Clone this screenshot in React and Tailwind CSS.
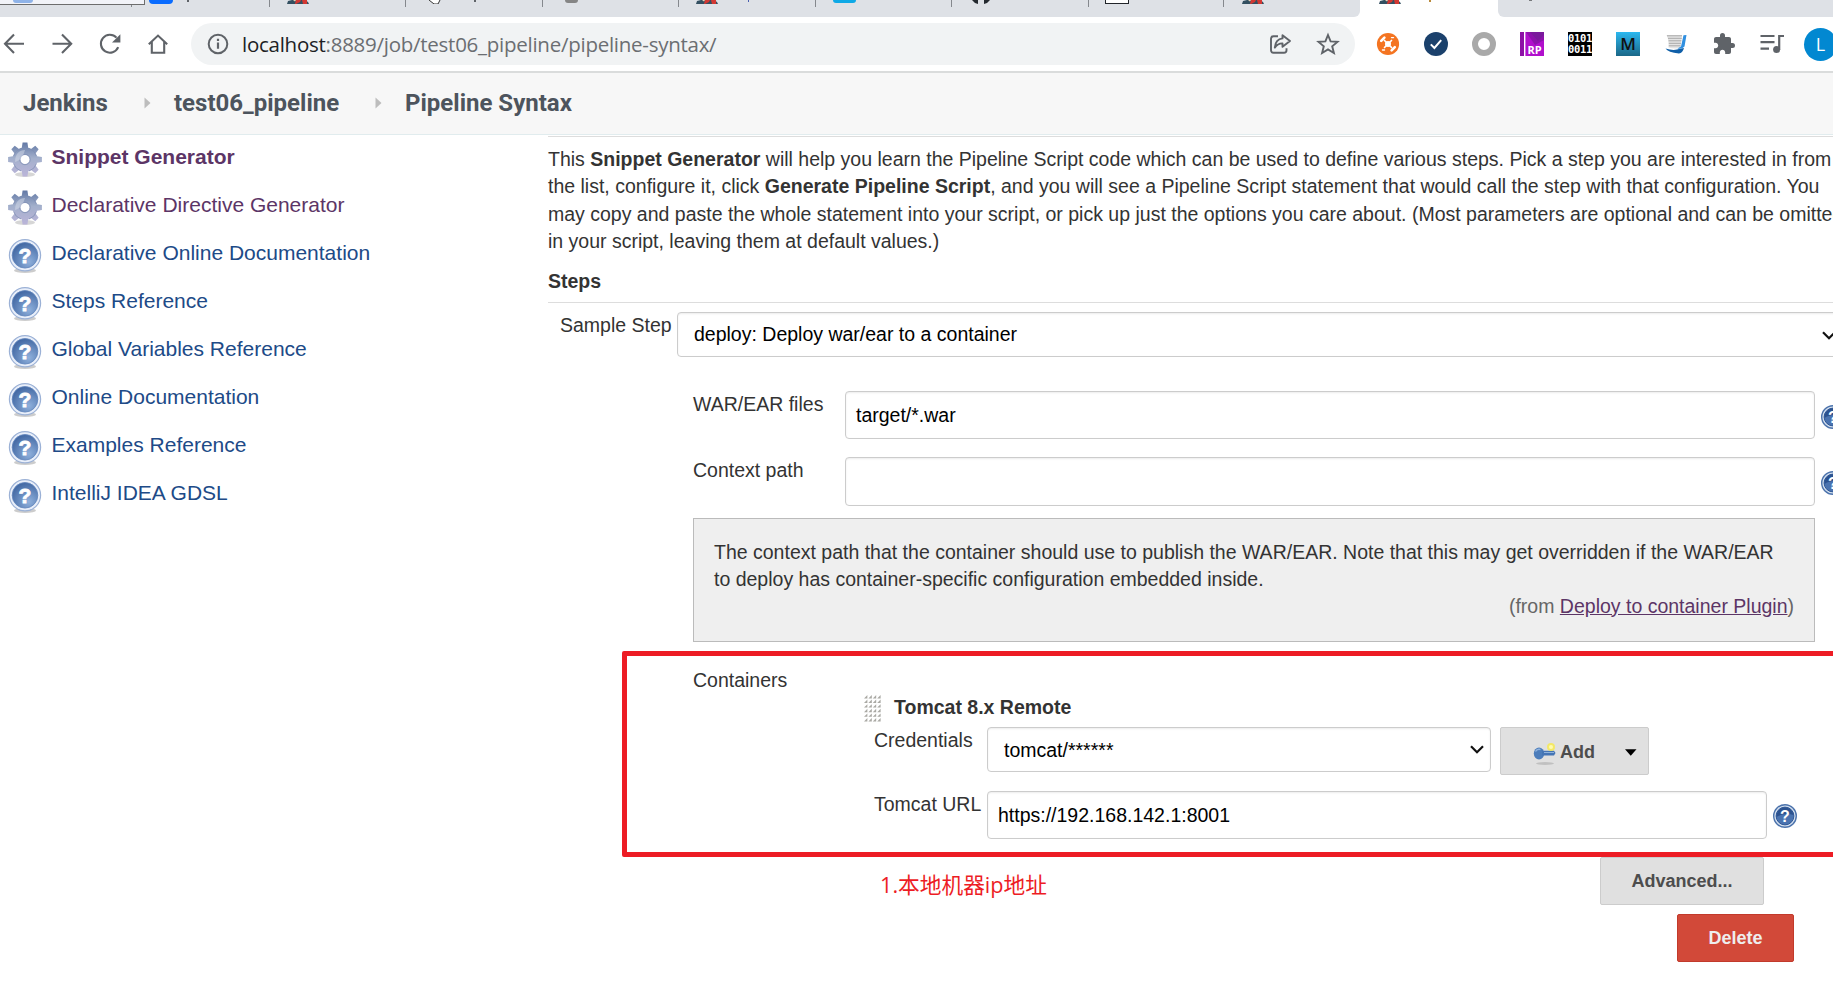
import React from "react";

const ARIAL = "font-['Liberation_Sans',Arial,sans-serif]";

/* ---------- shared drawings ---------- */

function Gear() {
  const teeth = [0, 45, 90, 135, 180, 225, 270, 315];
  return (
    <svg width="36" height="36" viewBox="0 0 36 36" className="shrink-0">
      <defs>
        <linearGradient id="gearFill" x1="0" y1="0" x2="0" y2="1" gradientUnits="objectBoundingBox">
          <stop offset="0" stopColor="#5f76a3" />
          <stop offset="0.45" stopColor="#a3b0cc" />
          <stop offset="1" stopColor="#bdb5da" />
        </linearGradient>
        <mask id="gearMask">
          <rect width="36" height="36" fill="#000" />
          <circle cx="18" cy="17.5" r="12.2" fill="#fff" />
          {teeth.map((a) => (
            <path key={a} d="M14.6 7 L15.6 0.6 H20.4 L21.4 7 Z" fill="#fff" transform={`rotate(${a} 18 17.5)`} />
          ))}
          <circle cx="18" cy="17.5" r="4.6" fill="#000" />
        </mask>
      </defs>
      <ellipse cx="18" cy="32.5" rx="10" ry="2.6" fill="#000" opacity="0.16" />
      <rect width="36" height="36" fill="url(#gearFill)" mask="url(#gearMask)" />
      <g fill="none" stroke="#7f8fb4" strokeWidth="1" opacity="0.75">
        <circle cx="18" cy="17.5" r="5.2" />
        <path d="M6.5 14 A12 12 0 0 1 14 6.3 M22 6.3 A12 12 0 0 1 29.5 14 M29.5 21.5 A12 12 0 0 1 22 29 M14 29 A12 12 0 0 1 6.5 21.5" />
      </g>
      <path d="M8 20 C8 12 12 8 18 8 C16 14 14 18 8 20Z" fill="#d5dcea" opacity="0.5" />
    </svg>
  );
}

function HelpLarge() {
  return (
    <svg width="36" height="36" viewBox="0 0 36 36" className="shrink-0">
      <defs>
        <radialGradient id="helpFill" cx="0.65" cy="0.75" r="0.75">
          <stop offset="0" stopColor="#8fb0dc" />
          <stop offset="1" stopColor="#4369a4" />
        </radialGradient>
      </defs>
      <ellipse cx="18" cy="32.5" rx="11" ry="2.6" fill="#000" opacity="0.2" />
      <circle cx="18" cy="17.3" r="15.6" fill="#e9effa" stroke="#9bb1d6" strokeWidth="1.2" />
      <circle cx="18" cy="17.3" r="12.8" fill="url(#helpFill)" stroke="#6084bb" strokeWidth="0.8" />
      <text x="18" y="25" textAnchor="middle" fontSize="21" fontWeight="700" fill="#fff" stroke="#fff" strokeWidth="0.8" fontFamily="Liberation Sans, Arial, sans-serif">?</text>
    </svg>
  );
}

function HelpSmall() {
  return (
    <svg width="24" height="24" viewBox="0 0 24 24" className="shrink-0">
      <circle cx="12" cy="12" r="11.3" fill="#d3dfee" stroke="#4c73ac" strokeWidth="1.4" />
      <circle cx="12" cy="12" r="8.9" fill="#4a73b0" stroke="#2f5796" strokeWidth="1" />
      <path d="M3.6 13 A8.4 8.4 0 0 1 20.4 11 C15 9 8 10 3.6 13Z" fill="#2c528f" />
      <text x="12" y="17.8" textAnchor="middle" fontSize="16" fontWeight="700" fill="#fff" fontFamily="Liberation Sans, Arial, sans-serif">?</text>
    </svg>
  );
}

function Chevron() {
  return (
    <svg width="14" height="9" viewBox="0 0 14 9" className="shrink-0">
      <path d="M1 1.2 L7 7.2 L13 1.2" fill="none" stroke="#111" strokeWidth="2.2" />
    </svg>
  );
}

function JenkinsFav() {
  return (
    <svg width="22" height="4" viewBox="0 0 22 4">
      <path d="M0 4 L1 1 L5 0 H18 L21 2 L22 4Z" fill="#335061" />
      <path d="M9 0 H14 L13 2 L9 4 H8Z M15 0 H20 V4 H16Z" fill="#d33833" />
      <path d="M6 0 H9 L8 1.5Z" fill="#f0d6b7" />
    </svg>
  );
}

/* ---------- browser tabs ---------- */

function TabSlot({ width, children }) {
  return (
    <div className={"flex h-full shrink-0 items-start " + width}>
      <div className="h-[7px] w-px shrink-0 bg-[#85888d]" />
      {children}
    </div>
  );
}

function TabStrip() {
  return (
    <div className="flex h-[17px] shrink-0 bg-[#dee1e6]">
      <div className="h-[5px] w-[131px] shrink-0" />
      <TabSlot width="w-[138px]">
        <div className="ml-[17px] h-[4px] w-[24px] rounded-b-[4px] bg-[#0a6cff]" />
        <div className="ml-[14px] h-[2px] w-[2px] bg-[#5f6368]" />
      </TabSlot>
      <TabSlot width="w-[136px]">
        <div className="ml-[17px]"><JenkinsFav /></div>
      </TabSlot>
      <TabSlot width="w-[137px]">
        <svg width="12" height="4" viewBox="0 0 12 4" className="ml-[23px]">
          <path d="M0 0 L5 4 H9 L11 0" fill="#fff" stroke="#333" strokeWidth="1" />
        </svg>
        <div className="ml-[33px] h-[2px] w-[2px] bg-[#5f6368]" />
      </TabSlot>
      <TabSlot width="w-[136px]">
        <div className="ml-[22px] h-[3px] w-[13px] rounded-b-full bg-[#858585]" />
      </TabSlot>
      <TabSlot width="w-[137px]">
        <div className="ml-[17px]"><JenkinsFav /></div>
        <div className="ml-[30px] h-[2px] w-px bg-[#4a5fb0]" />
      </TabSlot>
      <TabSlot width="w-[136px]">
        <div className="ml-[17px] h-[3px] w-[23px] rounded-b-[3px] bg-[#0fa9e6]" />
      </TabSlot>
      <TabSlot width="w-[137px]">
        <svg width="18" height="4" viewBox="0 0 18 4" className="ml-[20px]">
          <path d="M0 0 H6 V4 Q2 3 0 0Z M12 0 H18 Q16 3 12 4Z" fill="#24292f" />
        </svg>
      </TabSlot>
      <TabSlot width="w-[135px]">
        <div className="ml-[16px] h-[4px] w-[24px] border-x border-b border-[#22252a] bg-white" />
      </TabSlot>
      <TabSlot width="w-[131px]">
        <div className="ml-[18px]"><JenkinsFav /></div>
      </TabSlot>
      <div className="flex w-[150px] shrink-0 items-start bg-white">
        <div className="h-full w-[6px] shrink-0 rounded-br-[8px] bg-[#dee1e6]" />
        <div className="ml-[19px]"><JenkinsFav /></div>
        <div className="ml-[28px] h-[2px] w-[2px] bg-[#b98a3c]" />
        <div className="ml-auto h-full w-[6px] shrink-0 rounded-bl-[8px] bg-[#dee1e6]" />
      </div>
      <div className="ml-[25px] h-px w-[3px] bg-[#77797c]" />
      <div className="absolute top-0 left-0 flex h-[5px] w-[145px] justify-start border-r border-b border-[#6d6d6d] bg-[#f2f3f8]">
        <div className="ml-[13px] h-[3px] w-[20px] rounded-b-full bg-[#8fb3e8]" />
      </div>
    </div>
  );
}

/* ---------- toolbar ---------- */

function Toolbar() {
  return (
    <div className="flex h-[56px] shrink-0 items-start overflow-hidden border-b-2 border-[#dadcdc] bg-white">
      <div className="flex w-[191px] shrink-0 pt-[14px]">
        <svg width="191" height="26" viewBox="0 0 191 26" fill="none" stroke="#5f6368" strokeWidth="2.1">
          <path d="M24 12.8 H5.5 M14 3.6 L5 12.8 L14 22" />
          <path d="M52.5 12.8 H71 M62 3.6 L71.2 12.8 L62 22" />
          <path d="M118.2 16.2 A9 9 0 1 1 116.5 6.6" />
          <path d="M120.4 3.2 V11.6 H112 Z" fill="#5f6368" stroke="none" />
          <path d="M148.8 13.2 L158 4.6 L167.2 13.2 M151.8 11 V21.8 H164.2 V11" />
        </svg>
      </div>
      <div className="mt-[6px] flex h-[42px] w-[1164px] shrink-0 items-center rounded-full bg-[#f1f3f4]">
        <svg width="22" height="22" viewBox="0 0 22 22" className="ml-[16px] shrink-0">
          <circle cx="11" cy="11" r="9.3" fill="none" stroke="#5f6368" strokeWidth="2" />
          <path d="M11 9.6 V15.8 M11 5.8 V8" stroke="#5f6368" strokeWidth="2.2" />
        </svg>
        <div className="ml-[13px] text-[20.5px] leading-[30px] tracking-[-0.26px] whitespace-nowrap text-[#6b6e72] font-['Open_Sans','Noto_Sans',sans-serif]">
          <span className="text-[#202124]">localhost</span>:8889/job/test06_pipeline/pipeline-syntax/
        </div>
        <svg width="24" height="24" viewBox="0 0 24 24" className="ml-auto shrink-0" fill="none" stroke="#5f6368" strokeWidth="1.9" strokeLinejoin="round">
          <path d="M10 4.2 H5.5 Q3 4.2 3 6.7 V18.3 Q3 20.8 5.5 20.8 H16 Q18.5 20.8 18.5 18.3 V16.2" />
          <path d="M14.5 3.2 L22 9 L14.5 14.8 V11.4 C10.800 11.300 8.800 12.600 6.800 15.600 C7.200 10.600 9.600 6.900 14.500 6.400 Z" />
        </svg>
        <svg width="24" height="24" viewBox="0 0 24 24" className="mr-[15px] ml-[24px] shrink-0">
          <path d="M12 3 L14.6 9.4 L21.5 9.9 L16.2 14.3 L17.9 21 L12 17.4 L6.1 21 L7.8 14.3 L2.5 9.9 L9.4 9.4 Z" fill="none" stroke="#5f6368" strokeWidth="1.9" />
        </svg>
      </div>
      <div className="mt-[15px] ml-[21px] flex h-[24px] items-center gap-[24px]">
        <svg width="24" height="24" viewBox="0 0 24 24">
          <circle cx="12" cy="12" r="11.100" fill="#f47421" />
          <circle cx="12" cy="12" r="3" fill="#fff" />
          <g stroke="#fff" fill="none" strokeLinecap="round">
            <path d="M8.500 8.500 L15.500 15.500 M15.500 8.500 L8.500 15.500" strokeWidth="1.700" />
            <path d="M5.200 8.800 L8.400 5.600 M15.600 18.400 L18.800 15.200" strokeWidth="2.600" />
            <path d="M15.500 5.600 H17.500 M6.500 18 H8.500" strokeWidth="1.400" />
          </g>
        </svg>
        <svg width="24" height="24" viewBox="0 0 24 24">
          <circle cx="12" cy="12" r="12" fill="#1b416c" />
          <path d="M6.8 12.4 L10.4 16 L17.2 8.2" fill="none" stroke="#fff" strokeWidth="2" />
        </svg>
        <svg width="24" height="24" viewBox="0 0 24 24">
          <circle cx="12" cy="12" r="9" fill="#fff" stroke="#a9a9a9" strokeWidth="6" />
        </svg>
        <svg width="24" height="24" viewBox="0 0 24 24">
          <rect width="24" height="24" fill="#b010cc" />
          <path d="M6 0 H24 V8 L15 13 Z" fill="#8d12ac" />
          <path d="M10 0 L18 9 L24 3 V0Z" fill="#7a1a9c" />
          <rect x="4" width="1.4" height="24" fill="#fff" />
          <rect width="4" height="24" fill="#8d10a6" />
          <text x="14.600" y="21.500" textAnchor="middle" fontSize="11" fontWeight="700" fill="#fff" fontFamily="Open Sans, sans-serif">RP</text>
        </svg>
        <div className="flex h-[24px] w-[24px] flex-col items-center justify-center bg-black text-[10.500px] leading-[11px] font-bold tracking-[-0.300px] text-white font-['DejaVu_Sans_Mono',monospace]">
          <span className="h-[11px]">0101</span>
          <span className="h-[11px]">0011</span>
        </div>
        <div className="flex h-[24px] w-[24px] items-center justify-center bg-gradient-to-b from-[#2bb8f0] to-[#1b6888] text-[17px] leading-[22px] font-semibold text-[#111] font-['Open_Sans',sans-serif]">M</div>
        <svg width="24" height="24" viewBox="0 0 24 24">
          <path d="M2.500 3 H18 L16.500 16 Q10 17 4.500 15.500 Q5 8 2.500 3Z" fill="#e4e4e4" />
          <path d="M3 3.800 H18 M4 6.300 H17.800 M4.500 8.800 H17.400 M4.800 11.300 H17 M4.800 13.800 H16.600" stroke="#a8a8a8" strokeWidth="1" />
          <path d="M1.500 16.600 Q10 19.200 16 16.800 L20 16 Q18.500 21.300 15 21.500 Q4 20.500 1.500 16.600Z" fill="#0f5fa8" />
          <path d="M19.500 3.200 L22.500 3 L20.500 14.500 Q18 17.500 13.500 16.500 L17 14.500Z" fill="#2f8fe0" />
        </svg>
        <svg width="24" height="24" viewBox="0 0 24 24">
          <path d="M20.5 11H19V7c0-1.1-.9-2-2-2h-4V3.5a2.5 2.5 0 0 0-5 0V5H4c-1.1 0-2 .9-2 2v3.8h1.5c1.5 0 2.7 1.2 2.7 2.7s-1.2 2.7-2.7 2.7H2V20c0 1.1.9 2 2 2h3.8v-1.5c0-1.5 1.2-2.7 2.7-2.7s2.7 1.2 2.7 2.7V22H17c1.1 0 2-.9 2-2v-4h1.5a2.5 2.5 0 0 0 0-5z" fill="#5f6368" />
        </svg>
        <svg width="24" height="24" viewBox="0 0 24 24" fill="none" stroke="#5f6368" strokeWidth="2.2">
          <path d="M0.500 4 H14.500 M0.500 10.200 H14.500 M0.500 16.600 H9" />
          <path d="M19.200 18 V4 H24" />
          <circle cx="16.600" cy="17.600" r="3.500" fill="#5f6368" stroke="none" />
        </svg>
      </div>
      <div className="mt-[11px] ml-[20px] flex h-[33px] w-[33px] shrink-0 items-center justify-center rounded-full bg-[#0288d1] text-[18px] text-white font-['Open_Sans',sans-serif]">L</div>
    </div>
  );
}

/* ---------- breadcrumb ---------- */

function Crumb({ className, children }) {
  return <div className={"shrink-0 whitespace-nowrap " + className}>{children}</div>;
}

function Arrow() {
  return (
    <svg width="7" height="12" viewBox="0 0 7 12" className="mt-px shrink-0">
      <path d="M0.500 0.500 L6.500 6 L0.500 11.500Z" fill="#bdbdbd" />
    </svg>
  );
}

function Breadcrumb() {
  return (
    <div className="flex h-[62px] shrink-0 items-center border-b border-[#e1ecee] bg-[#f7f7f7] pb-[2px] text-[24px] leading-[30px] font-bold text-[#4d545d] font-['Roboto',sans-serif]">
      <Crumb className="ml-[23px] w-[121px]">Jenkins</Crumb>
      <Arrow />
      <Crumb className="ml-[23px] w-[201px]">test06_pipeline</Crumb>
      <Arrow />
      <Crumb className="ml-[23px]">Pipeline Syntax</Crumb>
    </div>
  );
}

/* ---------- sidebar ---------- */

const LINKS = [
  { text: "Snippet Generator", icon: "gear", cls: "font-bold text-[#5c3566]" },
  { text: "Declarative Directive Generator", icon: "gear", cls: "text-[#5c3566]" },
  { text: "Declarative Online Documentation", icon: "help", cls: "text-[#204a87]" },
  { text: "Steps Reference", icon: "help", cls: "text-[#204a87]" },
  { text: "Global Variables Reference", icon: "help", cls: "text-[#204a87]" },
  { text: "Online Documentation", icon: "help", cls: "text-[#204a87]" },
  { text: "Examples Reference", icon: "help", cls: "text-[#204a87]" },
  { text: "IntelliJ IDEA GDSL", icon: "help", cls: "text-[#204a87]" },
];

function Sidebar() {
  return (
    <nav className="w-[548px] shrink-0 text-[21px]">
      {LINKS.map((l) => (
        <div key={l.text} className="flex h-[48px] items-start pl-[7px]">
          <div className="mt-[7px]">{l.icon === "gear" ? <Gear /> : <HelpLarge />}</div>
          <a className={"ml-[8.500px] leading-[44px] whitespace-nowrap " + l.cls}>{l.text}</a>
        </div>
      ))}
    </nav>
  );
}

/* ---------- form ---------- */

const BOX = "flex shrink-0 rounded-[4px] border border-[#ccc] bg-white text-black shadow-[inset_0_1px_2px_rgba(0,0,0,0.08)] whitespace-nowrap";
const BTN = "flex h-[48px] shrink-0 items-center rounded-[2px] border text-[18px] font-bold";

function Main() {
  return (
    <main className="flex w-[1285px] shrink-0 flex-col pt-px text-[19.5px] leading-[27px] text-[#333]">
      <div className="h-px bg-[#ddd]" />
      <p className="mt-[9px] h-[108.500px] leading-[27.300px] whitespace-nowrap">
        This <b>Snippet Generator</b> will help you learn the Pipeline Script code which can be used to define various steps. Pick a step you are interested in from<br />
        the list, configure it, click <b>Generate Pipeline Script</b>, and you will see a Pipeline Script statement that would call the step with that configuration. You<br />
        may copy and paste the whole statement into your script, or pick up just the options you care about. (Most parameters are optional and can be omitted<br />
        in your script, leaving them at default values.)
      </p>
      <h2 className="mt-[13px] h-[35px] border-b border-[#ddd] font-bold">Steps</h2>

      <div className="mt-[9.500px] flex h-[79px] items-start">
        <label className="w-[129px] shrink-0 pl-[12px] whitespace-nowrap">Sample Step</label>
        <div className={BOX + " h-[45px] w-[1170px] items-center pl-[16px]"}>
          <span className="pb-px">deploy: Deploy war/ear to a container</span>
          <div className="mt-[2px] mr-[10px] ml-auto"><Chevron /></div>
        </div>
      </div>

      <div className="flex h-[66px] items-start pl-[145px]">
        <label className="w-[152px] shrink-0 leading-[26px]">WAR/EAR files</label>
        <div className={BOX + " h-[48px] w-[970px] items-center pl-[10px]"}>target/*.war</div>
        <div className="mt-[14px] ml-[6px]"><HelpSmall /></div>
      </div>
      <div className="flex h-[61px] items-start pl-[145px]">
        <label className="w-[152px] shrink-0 leading-[26px]">Context path</label>
        <div className={BOX + " h-[49px] w-[970px]"} />
        <div className="mt-[14px] ml-[6px]"><HelpSmall /></div>
      </div>

      <section className="ml-[145px] h-[124px] w-[1122px] shrink-0 border border-[#bbb] bg-[#efefef] pt-[19.500px] pr-[20px] pl-[20px] leading-[27px]">
        <p className="whitespace-nowrap">
          The context path that the container should use to publish the WAR/EAR. Note that this may get overridden if the WAR/EAR<br />
          to deploy has container-specific configuration embedded inside.
        </p>
        <p className="text-right text-[#666]">
          (from <a className="text-[#5c3566] underline">Deploy to container Plugin</a>)
        </p>
      </section>

      <div className="mt-[24.500px] h-[27px] pl-[145px]">Containers</div>
      <div className="mt-[1.500px] flex h-[32px] items-start pl-[316px]">
        <svg width="17" height="27" viewBox="0 0 17 27" className="shrink-0">
          {[0, 1, 2, 3, 4, 5].map((r) =>
            [0, 1, 2, 3].map((c) => (
              <path key={r + "-" + c} d={`M${c * 4.4 + 3.4} ${r * 4.6} v3.4 h-3.4z`} fill="#aaa9a4" />
            ))
          )}
        </svg>
        <b className="mt-[-1px] ml-[13px] leading-[27px]">Tomcat 8.x Remote</b>
      </div>

      <div className="flex h-[64px] items-start pl-[326px]">
        <label className="w-[113px] shrink-0">Credentials</label>
        <div className={BOX + " h-[45px] w-[504px] items-center pl-[16px]"}>
          <span className="pt-px">tomcat/******</span>
          <div className="mr-[6px] ml-auto"><Chevron /></div>
        </div>
        <button className={BTN + " ml-[9px] w-[149px] border-[#ccc] bg-[#e0e0e0] pl-[32px] text-[#4d4d4d]"}>
          <svg width="24" height="24" viewBox="0 0 24 24" className="mt-[5px] shrink-0">
            <ellipse cx="12" cy="21.5" rx="9" ry="1.5" fill="#000" opacity="0.14" />
            <ellipse cx="6" cy="11.5" rx="5.2" ry="6" fill="#4c7dbb" />
            <path d="M9 8.8 H21 L22.500 11 L21 13.500 H9Z" fill="#4475b5" />
            <path d="M2.500 9.500 Q4 6.500 7.500 7.500" stroke="#8fb3de" strokeWidth="1.4" fill="none" />
            <path d="M11 10.500 H21" stroke="#8fb3de" strokeWidth="1" />
            <circle cx="18" cy="5" r="4" fill="#f7ea4a" opacity="0.8" />
            <circle cx="18" cy="5" r="2" fill="#fffbb0" />
          </svg>
          <span className="mt-[2px] ml-[3px]">Add</span>
          <svg width="12" height="7" viewBox="0 0 12 7" className="mt-[3px] ml-[30px]">
            <path d="M0 0.300 H11.500 L5.750 6.800Z" fill="#000" />
          </svg>
        </button>
      </div>

      <div className="flex h-[66px] items-start pl-[326px]">
        <label className="w-[113px] shrink-0 whitespace-nowrap">Tomcat URL</label>
        <div className={BOX + " h-[48px] w-[780px] items-center pl-[10px]"}>https://192.168.142.1:8001</div>
        <div className="mt-[13px] ml-[6px]"><HelpSmall /></div>
      </div>

      <button className={BTN + " ml-[1052px] w-[164px] justify-center border-[#ccc] bg-[#e0e0e0] pt-px text-[#4d4d4d]"}>Advanced...</button>
      <button className={BTN + " mt-[9px] ml-[1129px] w-[117px] justify-center border-[#c23a2b] bg-[#d24939] pt-px text-[#eee]"}>Delete</button>
    </main>
  );
}

export default function App() {
  return (
    <div className={"relative flex h-[994px] w-[1833px] flex-col overflow-hidden bg-white " + ARIAL}>
      <TabStrip />
      <Toolbar />
      <Breadcrumb />
      <div className="flex">
        <Sidebar />
        <Main />
      </div>
      <div className="absolute top-[651px] left-[622px] h-[206px] w-[1240px] rounded-[2px] border-[5px] border-[#ed1c24]" />
      <div className="absolute top-[868px] left-[880px] text-[21.700px] leading-[34px] whitespace-nowrap text-[#ed1c24] font-['Open_Sans','Noto_Sans_CJK_SC',sans-serif]">
        1.本地机器ip地址
      </div>
    </div>
  );
}
